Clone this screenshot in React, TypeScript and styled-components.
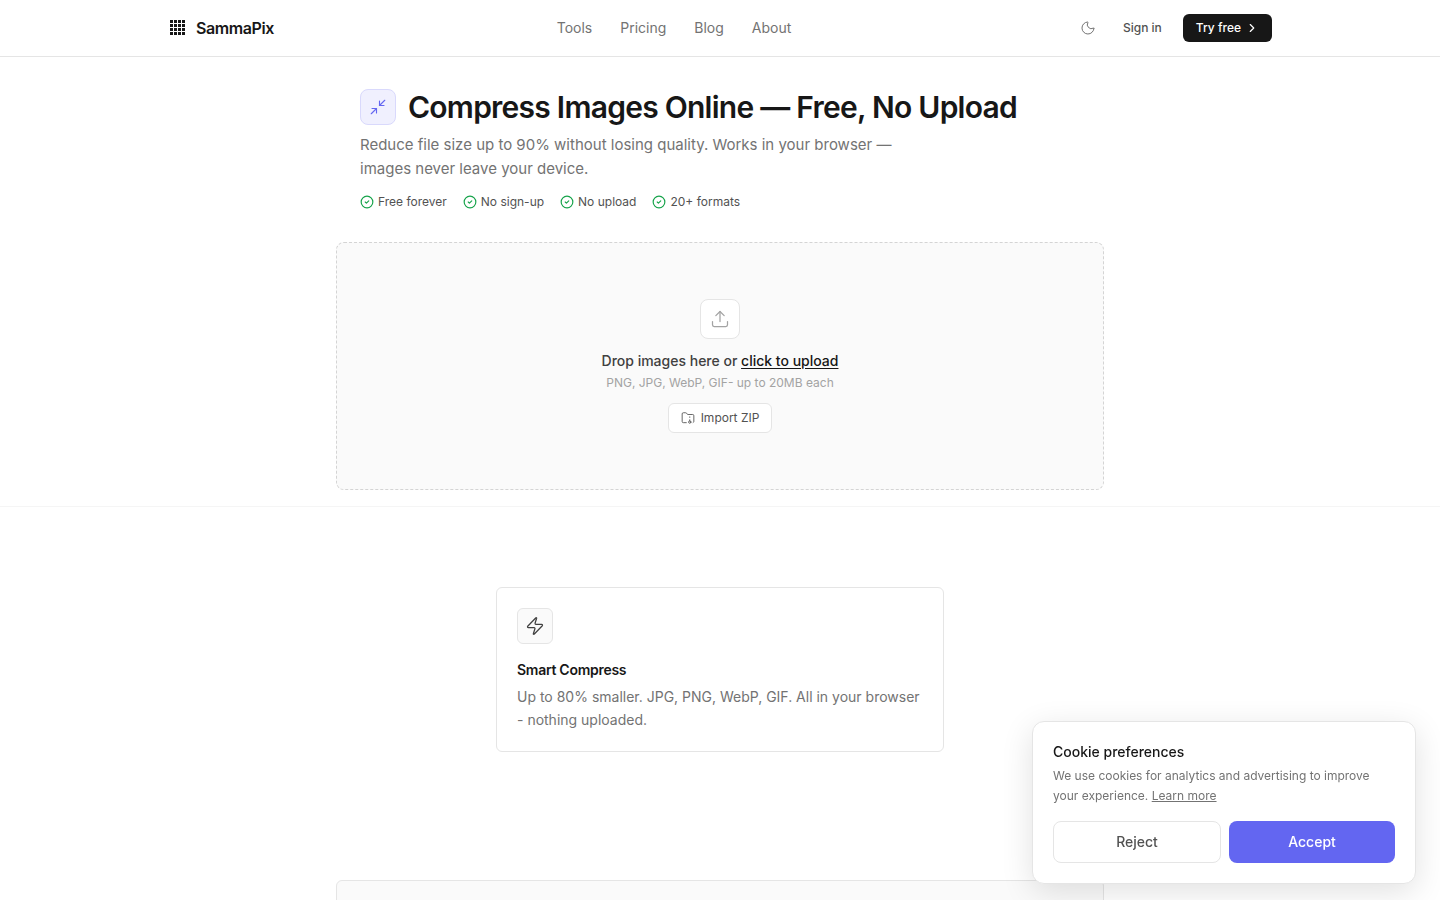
import React from 'react';
import styled, { createGlobalStyle } from 'styled-components';
import {
  ChevronRight,
  CircleCheck,
  FolderArchive,
  Minimize2,
  Moon,
  Upload,
  Zap,
} from 'lucide-react';

const GlobalStyle = createGlobalStyle`
  *, *::before, *::after { box-sizing: border-box; }
  body {
    margin: 0;
    background: #fff;
    color: #171717;
    font-family: Inter, "Liberation Sans", sans-serif;
    font-size: 14px;
    line-height: 20px;
    -webkit-font-smoothing: antialiased;
  }
  h1, h2, h3, p, ul { margin: 0; padding: 0; }
  ul { list-style: none; }
  a { color: inherit; text-decoration: none; }
  button { font: inherit; cursor: pointer; }
  svg { display: block; flex-shrink: 0; }
`;

const Header = styled.header`
  border-bottom: 1px solid #e5e5e5;
`;

const HeaderInner = styled.div`
  display: grid;
  grid-template-columns: auto auto auto;
  justify-content: space-between;
  align-items: center;
  max-width: 1152px;
  height: 56px;
  margin: 0 auto;
  padding: 0 24px;
`;

const Brand = styled.a`
  display: flex;
  align-items: center;
  gap: 8px;
  font-size: 16px;
  font-weight: 600;
  letter-spacing: -0.025em;
`;

const Nav = styled.nav`
  display: flex;
  gap: 28px;
  color: #737373;
`;

const Actions = styled.div`
  display: flex;
  align-items: center;
  gap: 8px;
  font-size: 12px;
  font-weight: 500;
`;

const IconButton = styled.button`
  display: grid;
  place-items: center;
  width: 28px;
  height: 28px;
  padding: 0;
  border: 0;
  background: none;
  color: #737373;
`;

const SignIn = styled.a`
  padding: 4px 13px;
  color: #525252;
`;

const TryFree = styled.a`
  display: flex;
  align-items: center;
  gap: 4px;
  height: 28px;
  padding: 0 13px;
  border-radius: 6px;
  background: #171717;
  color: #fff;
`;

const Hero = styled.section`
  padding: 32px 0 16px;
  border-bottom: 1px solid #f5f5f5;
`;

const Container = styled.div`
  max-width: 768px;
  margin: 0 auto;
`;

const Intro = styled.div`
  padding: 0 24px;
  margin-bottom: 32px;
`;

const TitleRow = styled.div`
  display: flex;
  align-items: center;
  gap: 12px;
  margin-bottom: 8px;
`;

const IconTile = styled.div<{ $tone: 'brand' | 'white' | 'muted'; $size: number }>`
  display: grid;
  place-items: center;
  flex-shrink: 0;
  width: ${(p) => p.$size}px;
  height: ${(p) => p.$size}px;
  border: 1px solid ${(p) => (p.$tone === 'brand' ? '#d9d9fc' : '#e5e5e5')};
  border-radius: ${(p) => (p.$tone === 'muted' ? 6 : 8)}px;
  background: ${(p) => ({ brand: '#f0f0fe', white: '#fff', muted: '#fafafa' })[p.$tone]};
  color: ${(p) => ({ brand: '#6366f1', white: '#a3a3a3', muted: '#404040' })[p.$tone]};
`;

const Title = styled.h1`
  font-size: 30px;
  line-height: 36px;
  font-weight: 600;
  letter-spacing: -0.025em;
`;

const Lead = styled.p`
  max-width: 576px;
  margin-bottom: 12px;
  font-size: 15px;
  line-height: 24px;
  color: #737373;
`;

const Benefits = styled.ul`
  display: flex;
  flex-wrap: wrap;
  gap: 4px 16px;
  font-size: 12px;
  line-height: 17px;
  color: #525252;
`;

const Benefit = styled.li`
  display: flex;
  align-items: center;
  gap: 4px;

  svg { color: #16a34a; }
`;

const Dropzone = styled.div`
  display: flex;
  flex-direction: column;
  align-items: center;
  padding: 56px 24px;
  border: 1px dashed #d4d4d4;
  border-radius: 8px;
  background: #fafafa;
  text-align: center;
`;

const DropLabel = styled.p`
  margin-top: 12px;
  font-weight: 500;
  color: #404040;
`;

const UploadLink = styled.button`
  padding: 0;
  border: 0;
  background: none;
  color: #171717;
  text-decoration: underline;
  text-underline-offset: 2px;
`;

const DropHint = styled.p`
  margin: 4px 0 12px;
  font-size: 12px;
  line-height: 16px;
  color: #a3a3a3;
`;

const ImportButton = styled.button`
  display: flex;
  align-items: center;
  gap: 6px;
  height: 30px;
  padding: 0 12px;
  border: 1px solid #e5e5e5;
  border-radius: 6px;
  background: #fff;
  font-size: 12px;
  color: #525252;
`;

const Features = styled.section`
  padding: 80px 24px 128px;
`;

const FeatureCard = styled.article`
  max-width: 448px;
  margin: 0 auto;
  padding: 20px;
  border: 1px solid #e5e5e5;
  border-radius: 6px;
`;

const FeatureTitle = styled.h2`
  margin: 16px 0 5px;
  font-size: 14px;
  line-height: 20px;
  font-weight: 600;
  letter-spacing: -0.02em;
`;

const FeatureText = styled.p`
  line-height: 23px;
  color: #737373;
`;

const Panel = styled.div`
  min-height: 160px;
  border: 1px solid #e5e5e5;
  border-radius: 6px;
  background: #fafafa;
`;

const CookieDialog = styled.aside`
  position: fixed;
  right: 24px;
  bottom: 16px;
  width: 384px;
  max-width: calc(100% - 48px);
  padding: 20px;
  border: 1px solid #e5e5e5;
  border-radius: 12px;
  background: #fff;
  box-shadow: 0 8px 32px rgba(0, 0, 0, 0.12);
`;

const CookieTitle = styled.h2`
  margin-bottom: 4px;
  font-size: 14px;
  line-height: 20px;
  font-weight: 500;
`;

const CookieText = styled.p`
  margin-bottom: 15px;
  font-size: 12px;
  line-height: 20px;
  color: #737373;

  a { text-decoration: underline; }
`;

const CookieActions = styled.div`
  display: flex;
  gap: 8px;
`;

const CookieButton = styled.button<{ $primary?: boolean }>`
  flex: 1;
  height: 42px;
  padding: 0 16px;
  border: ${(p) => (p.$primary ? '0' : '1px solid #e5e5e5')};
  border-radius: 8px;
  background: ${(p) => (p.$primary ? '#6366f1' : '#fff')};
  color: ${(p) => (p.$primary ? '#fff' : '#525252')};
  font-weight: 500;
`;

const Logo = () => (
  <svg width="20" height="20" viewBox="0 0 20 20" fill="#171717" shapeRendering="crispEdges" aria-hidden="true">
    {[2, 6, 10, 14].map((y) =>
      [2, 6, 10, 14].map((x) => <rect key={`${x}-${y}`} x={x} y={y} width="3" height="3" />),
    )}
  </svg>
);

const navItems = ['Tools', 'Pricing', 'Blog', 'About'];
const benefits = ['Free forever', 'No sign-up', 'No upload', '20+ formats'];

export default function App() {
  return (
    <>
      <GlobalStyle />
      <Header>
        <HeaderInner>
          <Brand href="#">
            <Logo />
            SammaPix
          </Brand>
          <Nav>
            {navItems.map((item) => (
              <a key={item} href="#">{item}</a>
            ))}
          </Nav>
          <Actions>
            <IconButton aria-label="Toggle theme">
              <Moon size={16} strokeWidth={1.5} />
            </IconButton>
            <SignIn href="#">Sign in</SignIn>
            <TryFree href="#">
              Try free
              <ChevronRight size={14} strokeWidth={2} />
            </TryFree>
          </Actions>
        </HeaderInner>
      </Header>

      <main>
        <Hero>
          <Container>
            <Intro>
              <TitleRow>
                <IconTile $tone="brand" $size={36}>
                  <Minimize2 size={18} strokeWidth={1.5} />
                </IconTile>
                <Title>Compress Images Online — Free, No Upload</Title>
              </TitleRow>
              <Lead>
                Reduce file size up to 90% without losing quality. Works in your browser — images
                never leave your device.
              </Lead>
              <Benefits>
                {benefits.map((benefit) => (
                  <Benefit key={benefit}>
                    <CircleCheck size={14} strokeWidth={2} />
                    {benefit}
                  </Benefit>
                ))}
              </Benefits>
            </Intro>
            <Dropzone>
              <IconTile $tone="white" $size={40}>
                <Upload size={20} strokeWidth={1.5} />
              </IconTile>
              <DropLabel>
                Drop images here or <UploadLink>click to upload</UploadLink>
              </DropLabel>
              <DropHint>PNG, JPG, WebP, GIF- up to 20MB each</DropHint>
              <ImportButton>
                <FolderArchive size={14} strokeWidth={1.5} />
                Import ZIP
              </ImportButton>
            </Dropzone>
          </Container>
        </Hero>

        <Features>
          <FeatureCard>
            <IconTile $tone="muted" $size={36}>
              <Zap size={20} strokeWidth={1.5} />
            </IconTile>
            <FeatureTitle>Smart Compress</FeatureTitle>
            <FeatureText>
              Up to 80% smaller. JPG, PNG, WebP, GIF. All in your browser - nothing uploaded.
            </FeatureText>
          </FeatureCard>
        </Features>

        <Container>
          <Panel />
        </Container>
      </main>

      <CookieDialog aria-label="Cookie preferences">
        <CookieTitle>Cookie preferences</CookieTitle>
        <CookieText>
          We use cookies for analytics and advertising to improve your experience.{' '}
          <a href="#">Learn more</a>
        </CookieText>
        <CookieActions>
          <CookieButton>Reject</CookieButton>
          <CookieButton $primary>Accept</CookieButton>
        </CookieActions>
      </CookieDialog>
    </>
  );
}
